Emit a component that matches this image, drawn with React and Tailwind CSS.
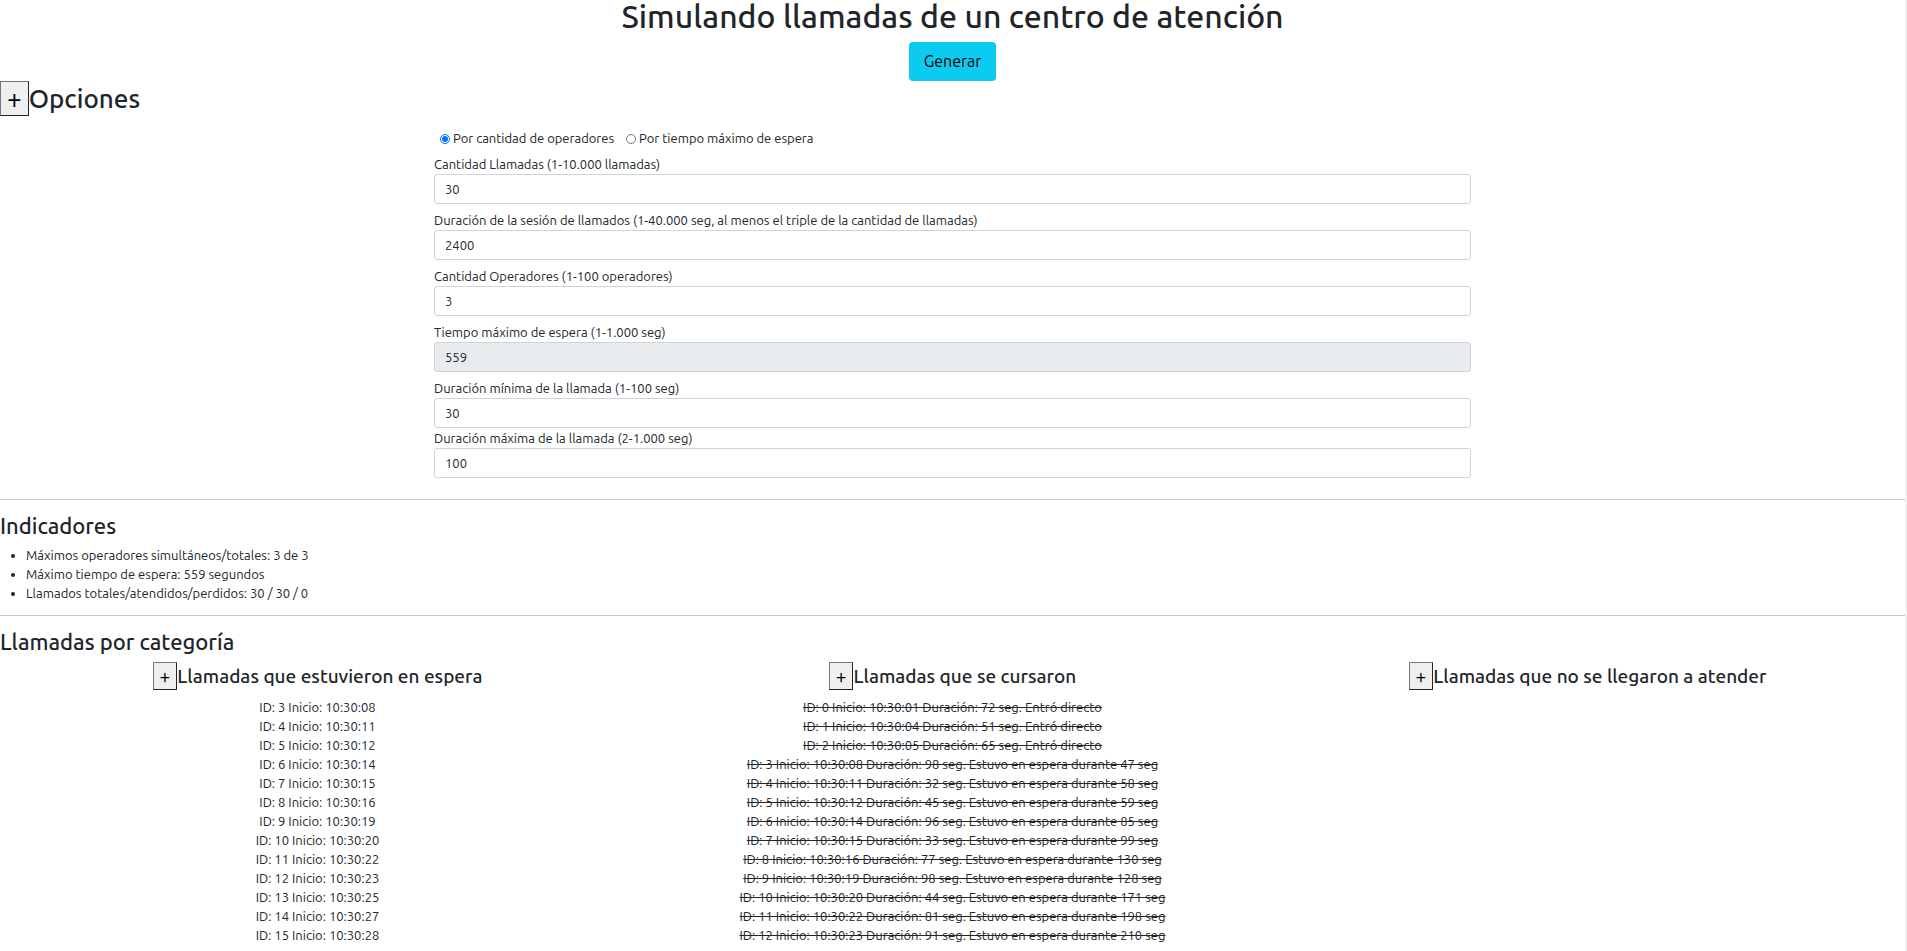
import React, { useState } from "react";

const waiting = [
  [3, "10:30:08"],
  [4, "10:30:11"],
  [5, "10:30:12"],
  [6, "10:30:14"],
  [7, "10:30:15"],
  [8, "10:30:16"],
  [9, "10:30:19"],
  [10, "10:30:20"],
  [11, "10:30:22"],
  [12, "10:30:23"],
  [13, "10:30:25"],
  [14, "10:30:27"],
  [15, "10:30:28"],
];

const completed = [
  [0, "10:30:01", 72, 0],
  [1, "10:30:04", 51, 0],
  [2, "10:30:05", 65, 0],
  [3, "10:30:08", 98, 47],
  [4, "10:30:11", 32, 58],
  [5, "10:30:12", 45, 59],
  [6, "10:30:14", 96, 85],
  [7, "10:30:15", 33, 99],
  [8, "10:30:16", 77, 130],
  [9, "10:30:19", 98, 128],
  [10, "10:30:20", 44, 171],
  [11, "10:30:22", 81, 198],
  [12, "10:30:23", 91, 210],
];

function ToggleButton({ label, expanded, onClick }) {
  return (
    <button
      type="button"
      aria-label={label}
      aria-expanded={expanded}
      onClick={onClick}
      className="border border-t-[#767676] border-l-[#767676] border-r-[#212529] border-b-[#212529] bg-[#efefef] px-[6px] py-px font-normal text-black"
    >
      +
    </button>
  );
}

function Field({ id, label, value, disabled, className = "" }) {
  return (
    <div className={className}>
      <label htmlFor={id} className="block leading-5">
        {label}
      </label>
      <input
        id={id}
        type="text"
        inputMode="numeric"
        defaultValue={value}
        disabled={disabled}
        className="block h-[30px] w-full rounded-[3px] border border-[#ced4da] bg-white px-[10px] disabled:bg-[#e9ecef]"
      />
    </div>
  );
}

function Category({ title, children }) {
  const [open, setOpen] = useState(true);
  return (
    <section className="flex flex-col items-center">
      <h4 className="mb-2 flex items-center text-[19px] leading-6 font-medium">
        <ToggleButton label={title} expanded={open} onClick={() => setOpen(!open)} />
        {title}
      </h4>
      {open && <ul className="text-center">{children}</ul>}
    </section>
  );
}

export default function App() {
  const [open, setOpen] = useState(true);
  const [mode, setMode] = useState("operadores");

  return (
    <main className="min-h-screen border-r-2 border-[#f1f1f1] bg-white font-['Ubuntu','Noto_Sans',sans-serif] text-[13px] leading-[19px] text-[#212529]">
      <header className="flex flex-col items-center">
        <h1 className="mb-[10px] text-[32px] leading-8 font-medium">
          Simulando llamadas de un centro de atención
        </h1>
        <button
          type="button"
          className="h-[39px] rounded-[4px] bg-[#0dcaf0] px-[15px] pb-[2px] text-base text-black"
        >
          Generar
        </button>
      </header>

      <section>
        <h2 className="mb-[13px] flex items-center text-[26px] leading-[31px] font-medium">
          <ToggleButton label="Opciones" expanded={open} onClick={() => setOpen(!open)} />
          Opciones
        </h2>
        {open && (
          <form className="mx-auto w-full max-w-[1037px]">
            <div className="mb-[6px] flex gap-3 pl-[6px]">
              <label className="flex items-center gap-[3px]">
                <input
                  type="radio"
                  name="modo"
                  checked={mode === "operadores"}
                  onChange={() => setMode("operadores")}
                  className="size-[10px]"
                />
                Por cantidad de operadores
              </label>
              <label className="flex items-center gap-[3px]">
                <input
                  type="radio"
                  name="modo"
                  checked={mode === "espera"}
                  onChange={() => setMode("espera")}
                  className="size-[10px]"
                />
                Por tiempo máximo de espera
              </label>
            </div>
            <Field id="llamadas" label="Cantidad Llamadas (1-10.000 llamadas)" value="30" />
            <Field
              id="sesion"
              label="Duración de la sesión de llamados (1-40.000 seg, al menos el triple de la cantidad de llamadas)"
              value="2400"
              className="mt-[6px]"
            />
            <Field id="operadores" label="Cantidad Operadores (1-100 operadores)" value="3" className="mt-[6px]" />
            <Field
              id="espera"
              label="Tiempo máximo de espera (1-1.000 seg)"
              value="559"
              disabled={mode === "operadores"}
              className="mt-[6px]"
            />
            <Field id="minima" label="Duración mínima de la llamada (1-100 seg)" value="30" className="mt-[6px]" />
            <Field id="maxima" label="Duración máxima de la llamada (2-1.000 seg)" value="100" />
          </form>
        )}
      </section>

      <hr className="mt-[21px] mb-3 border-[#c8c9ca]" />

      <section>
        <h3 className="mb-[7px] text-[22px] leading-[27px] font-medium">Indicadores</h3>
        <ul className="list-disc pl-[26px]">
          <li>Máximos operadores simultáneos/totales: 3 de 3</li>
          <li>Máximo tiempo de espera: 559 segundos</li>
          <li>Llamados totales/atendidos/perdidos: 30 / 30 / 0</li>
        </ul>
      </section>

      <hr className="my-3 border-[#c8c9ca]" />

      <section>
        <h3 className="mb-[7px] text-[22px] leading-[27px] font-medium">Llamadas por categoría</h3>
        <div className="grid grid-cols-3">
          <Category title="Llamadas que estuvieron en espera">
            {waiting.map(([id, start]) => (
              <li key={id}>{`ID: ${id} Inicio: ${start}`}</li>
            ))}
          </Category>
          <Category title="Llamadas que se cursaron">
            {completed.map(([id, start, duration, wait]) => (
              <li key={id} className="line-through">
                {`ID: ${id} Inicio: ${start} Duración: ${duration} seg. ${
                  wait ? `Estuvo en espera durante ${wait} seg` : "Entró directo"
                }`}
              </li>
            ))}
          </Category>
          <Category title="Llamadas que no se llegaron a atender" />
        </div>
      </section>
    </main>
  );
}
